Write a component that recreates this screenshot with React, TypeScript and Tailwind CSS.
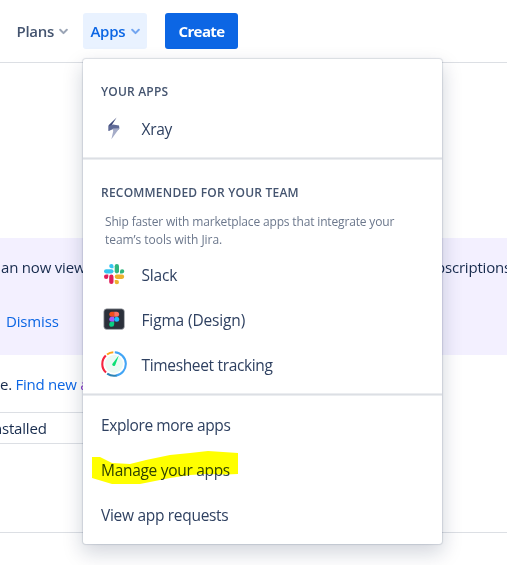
import type { ReactNode } from "react";

function Chevron({ color }: { color: string }) {
  return (
    <svg width="9" height="7" viewBox="0 0 9 7" fill="none" stroke={color} strokeWidth="2" strokeLinecap="round" strokeLinejoin="round">
      <path d="M1.2 1.8 4.5 5.1 7.8 1.8" />
    </svg>
  );
}

function XrayIcon() {
  return (
    <svg width="26" height="26" viewBox="0 0 26 26">
      <path d="M15.6 2.4 7.6 10.2V16l3-2.4-.4-2.6Z" fill="#3c487a" />
      <path d="M7.6 16v-5L12 9.4l6 1.2.4 2.8-1.6 1.8-4.4-1.2Z" fill="#5f6a97" />
      <path d="m11.8 13.6 6.6-.4L10.4 24.2l1.8-8Z" fill="#a5acc8" />
    </svg>
  );
}

function SlackIcon() {
  return (
    <svg width="26" height="26" viewBox="0 0 26 26">
      <g fill="#36c5f0">
        <rect x="3" y="8.2" width="9.5" height="4.3" rx="2.15" />
        <path d="M12.5 7.2h-2.1a2.15 2.15 0 1 1 2.1-2.1Z" />
      </g>
      <g fill="#2eb67d">
        <rect x="13.7" y="3" width="4.3" height="9.5" rx="2.15" />
        <path d="M19 12.5v-2.1a2.15 2.15 0 1 1 2.1 2.1Z" />
      </g>
      <g fill="#ecb22e">
        <rect x="13.7" y="13.6" width="9.5" height="4.3" rx="2.15" />
        <path d="M13.7 19h2.1a2.15 2.15 0 1 1-2.1 2.1Z" />
      </g>
      <g fill="#e01e5a">
        <rect x="8.2" y="13.6" width="4.3" height="9.5" rx="2.15" />
        <path d="M7.3 13.6v2.1a2.15 2.15 0 1 1-2.1-2.1Z" />
      </g>
    </svg>
  );
}

function FigmaIcon() {
  return (
    <svg width="26" height="26" viewBox="0 0 26 26">
      <rect x="2.8" y="2.8" width="20.6" height="20.6" rx="3" fill="#2b303b" stroke="#b6b8bd" strokeWidth=".7" />
      <path d="M13.2 5.8h-2.4a2.5 2.5 0 0 0 0 5h2.4Z" fill="#f24e1e" />
      <path d="M13.2 5.8h2.4a2.5 2.5 0 0 1 0 5h-2.4Z" fill="#ff7262" />
      <path d="M13.2 10.8h-2.4a2.5 2.5 0 0 0 0 5h2.4Z" fill="#a259ff" />
      <circle cx="15.7" cy="13.3" r="2.5" fill="#1abcfe" />
      <path d="M13.2 15.8h-2.4a2.5 2.5 0 1 0 2.4 2.5Z" fill="#0acf83" />
    </svg>
  );
}

function TimesheetIcon() {
  return (
    <svg width="26" height="26" viewBox="0 0 26 26" fill="none" strokeWidth="2.1">
      <circle cx="13" cy="13" r="9" fill="#eafaf4" />
      <path d="M13.8 1.2A11.8 11.8 0 0 1 15 24.6" stroke="#42a5f5" />
      <path d="M15.5 24.5A11.8 11.8 0 0 1 6.2 22.6" stroke="#2b83b5" />
      <path d="M5 21.6A11.8 11.8 0 0 1 4.8 4.6" stroke="#f5243f" />
      <path d="M6 3.5A11.8 11.8 0 0 1 12.3 1.3" stroke="#ffa41c" />
      <path d="M17.8 4.5 11.6 12.4a1.6 1.6 0 1 0 2.8 1.4Z" fill="#0be076" />
    </svg>
  );
}

function AppRow({ icon, label, spacing }: { icon: ReactNode; label: string; spacing: string }) {
  return (
    <div className="flex h-[45px] items-center pl-[18px]">
      <span className="mb-[3px]">{icon}</span>
      <span className={"ml-[14.5px] text-[15.5px] text-[#2f4161] " + spacing}>{label}</span>
    </div>
  );
}

function Divider() {
  return <div className="h-[3px] border-y border-[#ebedf0] bg-[#dcdfe4]" />;
}

function Menu() {
  return (
    <div className="absolute left-[83px] top-[59px] h-[485px] w-[359px] rounded-[3px] bg-white shadow-[0_0_1px_1px_rgba(9,30,66,0.12),0_8px_20px_1px_rgba(9,30,66,0.18)]">
      <div className="h-[98px] pt-[25px]">
        <div className="h-[16px] pl-[18px] text-[12px] leading-[16px] font-semibold tracking-[0.2px] text-[#44546f]">YOUR APPS</div>
        <div className="pt-[7px]">
          <AppRow icon={<XrayIcon />} label="Xray" spacing="tracking-[-0.3px]" />
        </div>
      </div>
      <Divider />
      <div className="h-[233px] pt-[25px]">
        <div className="h-[16px] pl-[18px] text-[12px] leading-[16px] font-semibold tracking-[0.22px] text-[#44546f]">RECOMMENDED FOR YOUR TEAM</div>
        <div className="mt-[12px] pl-[22px] text-[12px] leading-[18px] tracking-[-0.16px] whitespace-nowrap text-[#6b778c]">
          Ship faster with marketplace apps that integrate your
          <br />
          <span className="tracking-[-0.05px]">team’s tools with Jira.</span>
        </div>
        <div className="mt-[4px]">
          <AppRow icon={<SlackIcon />} label="Slack" spacing="tracking-[-0.2px]" />
          <AppRow icon={<FigmaIcon />} label="Figma (Design)" spacing="tracking-[-0.14px]" />
          <AppRow icon={<TimesheetIcon />} label="Timesheet tracking" spacing="tracking-[-0.34px]" />
        </div>
      </div>
      <Divider />
      <div className="pt-[7px] pl-[18px] text-[15.5px] leading-[45px] tracking-[-0.3px] text-[#2f4161]">
        <div className="tracking-[-0.4px]">Explore more apps</div>
        <div className="relative">
          Manage your apps
          <svg className="absolute left-[-9px] top-[-4px] mix-blend-multiply" width="146" height="40" viewBox="92 442 146 40">
            <path d="M92 455h8l4 2 8 4 18 1 16-4 24-5 20-2 18-2 30 2v21l-12 .5-20-.5-16 1-20 3-30 6h-28l-10-3-10-3Z" fill="#ffff00" />
          </svg>
        </div>
        <div>View app requests</div>
      </div>
    </div>
  );
}

export default function App() {
  return (
    <div className="relative h-[565px] w-[507px] overflow-hidden bg-white font-['Open_Sans','Noto_Sans',sans-serif] text-[15px] whitespace-nowrap text-[#172b4d]">
      <header className="flex h-[63px] items-start border-b border-[#dcdfe4] pt-[13px] font-semibold">
        <div className="flex h-[36px] w-[83px] items-center pl-[16.5px] text-[#44546f]">
          <span className="w-[38px] tracking-[-0.3px]">Plans</span>
          <span className="ml-[4px]"><Chevron color="#9aa4b5" /></span>
        </div>
        <div className="flex h-[36px] w-[64px] items-center rounded-[3px] bg-[#e9f2ff] pl-[7.5px] text-[#0c66e4]">
          <span className="w-[36px] tracking-[-0.3px]">Apps</span>
          <span className="ml-[4px]"><Chevron color="#72a5f0" /></span>
        </div>
        <div className="ml-[18px] flex h-[36px] w-[73px] items-center justify-center rounded-[3px] bg-[#0c66e4] font-bold tracking-[-0.6px] text-white">Create</div>
      </header>
      <section className="mt-[175px] h-[117px] bg-[#f3f0ff] pt-[18px]">
        <div className="flex h-[22px] items-center tracking-[-0.2px]">
          <span className="w-[436px] shrink-0 pl-px">an now view</span>
          <span>bscriptions</span>
        </div>
        <div className="mt-[32px] h-[22px] pl-[6px] leading-[22px] tracking-[-0.15px] text-[#0c66e4]">Dismiss</div>
      </section>
      <div className="mt-[19px] h-[22px] leading-[20px] tracking-[-0.25px]">
        e. <span className="text-[#0c66e4]">Find new </span><span className="text-[#8f3fd0]">apps</span>
      </div>
      <div className="mt-[16px] flex h-[32px] w-[200px] items-center border-y border-[#dcdfe4] tracking-[-0.2px]">
        <span className="-ml-[7px]">nstalled</span>
      </div>
      <div className="mt-[88px] h-px bg-[#dcdfe4]" />
      <Menu />
    </div>
  );
}
